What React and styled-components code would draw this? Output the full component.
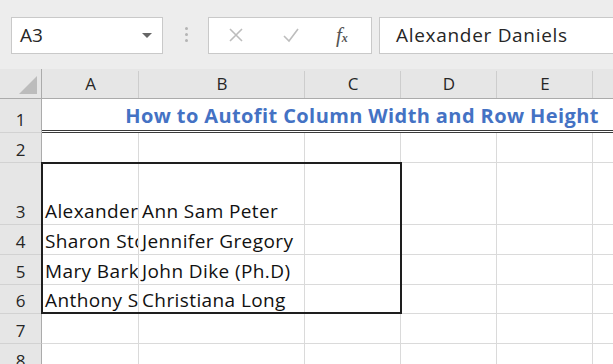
import React from 'react';
import styled, { createGlobalStyle } from 'styled-components';

const GlobalStyle = createGlobalStyle`
  html, body {
    margin: 0;
    padding: 0;
    background: #fff;
    overflow: hidden;
  }
  body {
    font-family: "Open Sans", "Noto Sans", sans-serif;
  }
`;

const Page = styled.div`
  width: 613px;
  height: 364px;
  overflow: hidden;
  background: #fff;
`;

// ---- formula bar ----
const FormulaBar = styled.div`
  display: flex;
  align-items: center;
  height: 69px;
  padding-left: 11px;
  background: #ededed;
  box-sizing: border-box;
`;

const Field = styled.div`
  display: flex;
  align-items: center;
  height: 37px;
  box-sizing: border-box;
  background: #fff;
  border: 1px solid #c9c9c9;
  margin-top: 1px;
`;

const NameBox = styled(Field)`
  width: 152px;
  padding: 0 10px 0 8px;
  justify-content: space-between;
  font-size: 19px;
  color: #262626;
`;

const DropArrow = styled.span`
  width: 0;
  height: 0;
  border-left: 5px solid transparent;
  border-right: 5px solid transparent;
  border-top: 5px solid #666;
  margin-top: 1px;
`;

const Grip = styled.div`
  display: flex;
  flex-direction: column;
  gap: 3px;
  margin: 0 20px 0 22px;
  & > span {
    width: 3px;
    height: 3px;
    border-radius: 50%;
    background: #b4b4b4;
  }
`;

const Buttons = styled(Field)`
  width: 164px;
  padding-left: 19px;
  gap: 38px;
`;

const Fx = styled.span`
  font-family: "Liberation Serif", serif;
  font-style: italic;
  font-size: 21px;
  color: #555;
  margin-left: -2px;
  & small {
    font-size: 12px;
    font-weight: bold;
  }
`;

const FormulaInput = styled(Field)`
  flex: 1;
  margin-left: 7px;
  border-right: none;
  padding-left: 16px;
  font-size: 19px;
  letter-spacing: 0.7px;
  color: #262626;
`;

// ---- sheet ----
const Sheet = styled.div`
  display: grid;
  grid-template-columns: 42px 97px 166px 96px 96px 96px 97px;
  grid-template-rows: 30px 34px 30px 62px 30px 30px 29px 30px 30px;
  width: 720px;
`;

const Placed = styled.div`
  grid-row: ${p => p.$r};
  grid-column: ${p => p.$c};
  box-sizing: border-box;
`;

const Corner = styled(Placed)`
  background: #e6e6e6;
  border-right: 1px solid #ababab;
  border-bottom: 1px solid #ababab;
  display: flex;
  align-items: flex-end;
  justify-content: flex-end;
  padding: 0 4px 4px 0;
  & > span {
    width: 0;
    height: 0;
    border-left: 18px solid transparent;
    border-bottom: 18px solid #bcbcbc;
  }
`;

const ColHead = styled(Placed)`
  background: #e6e6e6;
  border-bottom: 1px solid #ababab;
  display: flex;
  align-items: center;
  justify-content: center;
  font-size: 17px;
  color: #262626;
  position: relative;
  &::after {
    content: '';
    position: absolute;
    right: 0;
    top: 2px;
    bottom: 0;
    width: 1px;
    background: #cdcdcd;
  }
`;

const RowHead = styled(Placed)`
  background: #e6e6e6;
  border-right: 1px solid #ababab;
  border-bottom: 1px solid #d2d2d2;
  display: flex;
  align-items: flex-end;
  justify-content: center;
  padding-bottom: 1px;
  font-size: 17px;
  color: #262626;
`;

const Cell = styled(Placed)`
  border-right: 1px solid #dadada;
  border-bottom: 1px solid #dadada;
  display: flex;
  align-items: flex-end;
  padding: 0 0 0 3px;
  font-size: 19px;
  letter-spacing: 0.4px;
  color: #111;
  white-space: nowrap;
  overflow: hidden;
`;

const TitleCell = styled(Placed)`
  border-bottom: 3px double #3a3a3a;
  display: flex;
  align-items: center;
  justify-content: center;
  padding: 2px 8px 0 0;
  font-weight: bold;
  font-size: 20px;
  letter-spacing: 0.4px;
  color: #4472c4;
  white-space: nowrap;
`;

const Outline = styled(Placed)`
  border: 2px solid #1e1e1e;
  margin: -1px -1px 0 -1px;
  pointer-events: none;
`;

const columns = ['A', 'B', 'C', 'D', 'E', 'F'];

const people = [
  ['Alexander Daniels', 'Ann Sam Peter'],
  ['Sharon Stone', 'Jennifer Gregory'],
  ['Mary Barker', 'John Dike (Ph.D)'],
  ['Anthony Smith', 'Christiana Long'],
];

const XIcon = () => (
  <svg width="16" height="16" viewBox="0 0 16 16">
    <path d="M2 2 L14 14 M14 2 L2 14" stroke="#bdbdbd" strokeWidth="1.6" fill="none" />
  </svg>
);

const CheckIcon = () => (
  <svg width="18" height="16" viewBox="0 0 18 16">
    <path d="M2 9 L7 14 L16 2" stroke="#bdbdbd" strokeWidth="1.6" fill="none" />
  </svg>
);

export default function App() {
  const body = [];
  // grid rows: 1 header, 2 title, 3..9 sheet rows 2..8
  for (let n = 2; n <= 8; n++) {
    const r = n + 1;
    const person = people[n - 3];
    body.push(<RowHead key={'h' + n} $r={r} $c={1}>{n}</RowHead>);
    columns.forEach((c, i) => {
      body.push(
        <Cell key={c + n} $r={r} $c={i + 2}>
          {person && i < 2 ? person[i] : null}
        </Cell>
      );
    });
  }

  return (
    <Page>
      <GlobalStyle />
      <FormulaBar>
        <NameBox>
          A3
          <DropArrow />
        </NameBox>
        <Grip>
          <span />
          <span />
          <span />
        </Grip>
        <Buttons>
          <XIcon />
          <CheckIcon />
          <Fx>f<small>x</small></Fx>
        </Buttons>
        <FormulaInput>Alexander Daniels</FormulaInput>
      </FormulaBar>
      <Sheet>
        <Corner $r={1} $c={1}><span /></Corner>
        {columns.map((c, i) => (
          <ColHead key={c} $r={1} $c={i + 2}>{c}</ColHead>
        ))}
        <RowHead $r={2} $c={1}>1</RowHead>
        <TitleCell $r={2} $c="2 / span 6">How to Autofit Column Width and Row Height</TitleCell>
        {body}
        <Outline $r="4 / 8" $c="2 / 5" />
      </Sheet>
    </Page>
  );
}
